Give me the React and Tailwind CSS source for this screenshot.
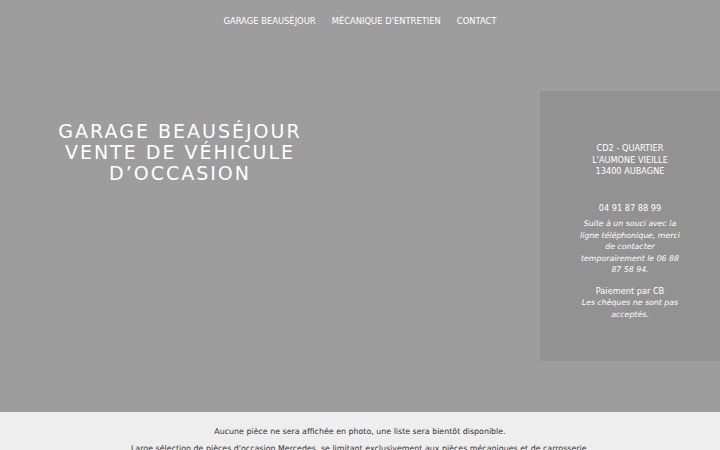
export default function App() {
  const font = { fontFamily: '"DejaVu Sans", "Open Sans", sans-serif' };
  return (
    <div className="w-[720px] h-[450px] overflow-hidden bg-[#9d9d9d]" style={font}>
      <div className="h-[412px] flex flex-col">
        <nav className="h-[41px] flex items-center justify-center gap-[16px] text-[8.4px] text-white pt-[1px]">
          <span>GARAGE BEAUSÉJOUR</span>
          <span>MÉCANIQUE D'ENTRETIEN</span>
          <span>CONTACT</span>
        </nav>
        <div className="flex flex-1">
          <div className="w-[360px] pt-[80px] flex flex-col items-center text-white text-[19px] leading-[21px] tracking-[2px] text-center">
            <div>GARAGE BEAUSÉJOUR</div>
            <div>VENTE DE VÉHICULE</div>
            <div>D’OCCASION</div>
          </div>
          <div className="flex-1" />
          <div className="w-[180px] mt-[50px] h-[270px] bg-[#929292] text-white text-[8.2px] leading-[11.5px] text-center flex flex-col items-center pt-[52px] px-[36px]">
            <div>CD2 - QUARTIER</div>
            <div>L'AUMONE VIEILLE</div>
            <div>13400 AUBAGNE</div>
            <div className="mt-[25px]">04 91 87 88 99</div>
            <div className="mt-[4px] italic text-[7.8px]">Suite à un souci avec la ligne téléphonique, merci de contacter temporairement le 06 88 87 58 94.</div>
            <div className="mt-[10px] font-medium">Paiement par CB</div>
            <div className="italic text-[7.8px]">Les chèques ne sont pas acceptés.</div>
          </div>
        </div>
      </div>
      <div className="bg-[#eeeeee] h-[38px] text-[#333] text-[7.9px] text-center pt-[11px] leading-[17px]">
        <div>Aucune pièce ne sera affichée en photo, une liste sera bientôt disponible.</div>
        <div>Large sélection de pièces d'occasion Mercedes, se limitant exclusivement aux pièces mécaniques et de carrosserie.</div>
      </div>
    </div>
  );
}
